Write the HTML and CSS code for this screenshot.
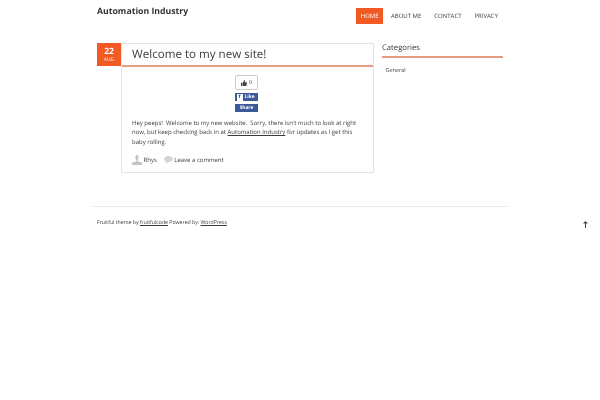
FILE: index.html
```html
<!DOCTYPE html>
<html>
<head>
<meta charset="UTF-8">
<title>Automation Industry</title>
<link rel="stylesheet" href="styles.css">
</head>
<body>

<div class="page">
  <div class="header">
    <a class="logo" href="#">Automation Industry</a>
    <ul class="nav">
      <li class="current"><a href="#">HOME</a></li>
      <li><a href="#">ABOUT ME</a></li>
      <li><a href="#">CONTACT</a></li>
      <li><a href="#">PRIVACY</a></li>
    </ul>
  </div>

  <div class="main">
    <div class="date">
      <span class="day">22</span>
      <span class="month">AUG</span>
    </div>

    <div class="post">
      <h1 class="post-title">Welcome to my new site!</h1>
      <div class="post-body">
        <div class="share">
          <div class="count">
            <svg class="thumb" width="6" height="6" viewBox="0 0 8 8"><path d="M0 3.500h1.800V8H0zM2.400 3.500 4 1V0h.8l.5 1-.5 2H8l-.8 5H2.400z" fill="#444"/></svg>
            <span>0</span>
          </div>
          <div class="fb-btn"><b class="fb-f">f</b>Like</div>
          <div class="fb-btn">Share</div>
        </div>
        <p class="text">Hey peeps!&nbsp; Welcome to my new website.&nbsp; Sorry, there isn't much to look at right now, but keep checking back in at <a href="#">Automation Industry</a> for updates as I get this baby rolling.</p>
        <div class="meta">
          <span class="meta-item">
            <svg width="10" height="10" viewBox="0 0 10 10"><path d="M3.400 2.600C3.400 1 4 0 5 0s1.600 1 1.600 2.600c0 1.200-.5 2.200-1 2.700v1l4 1.300c.3.100.4.400.4.700V10H0V8.300c0-.3.100-.6.400-.7l4-1.300v-1c-.5-.5-1-1.500-1-2.700z" fill="#c4c4c4"/></svg>
            Rhys
          </span>
          <span class="meta-item">
            <svg width="9" height="8" viewBox="0 0 10 9"><path d="M5 0c2.800 0 5 1.500 5 3.500S7.800 7 5 7h-.6L2.500 9V6.700C1 6.200 0 5 0 3.500 0 1.500 2.200 0 5 0z" fill="#d4d4d4"/></svg>
            Leave a comment
          </span>
        </div>
      </div>
    </div>

    <div class="sidebar">
      <h3 class="widget-title">Categories</h3>
      <a class="cat" href="#">General</a>
    </div>
  </div>

  <div class="footer">
    Fruitful theme by <a href="#">fruitfulcode</a> Powered by: <a href="#">WordPress</a>
  </div>
</div>

<a class="top" href="#"><svg width="5" height="7" viewBox="0 0 5 7"><path d="M2.500 0 5 2.500H3V7H2V2.500H0z" fill="#444"/></svg></a>

</body>
</html>
```

FILE: styles.css
```css
*{ margin: 0; padding: 0; box-sizing: border-box; }
body{ font-family: "Open Sans", "Noto Sans", sans-serif; color: #3c3c3c; background: #fff; text-rendering: geometricPrecision; }
a{ color: #3c3c3c; }
ul{ list-style: none; }

.page{ width: 416px; margin-left: 92px; will-change: transform; }

.header{ display: flex; justify-content: space-between; height: 43px; padding-left: 5px; }
.logo{ font-size: 8.700px; font-weight: 700; line-height: 12px; margin-top: 5px; color: #333; text-decoration: none; }
.nav{ display: flex; margin-top: 8px; margin-right: 4px; }
.nav li{ height: 16px; padding: 0 6px; margin-left: 1px; }
.nav a{ font-size: 6px; line-height: 16px; color: #3c3c3c; text-decoration: none; display: block; }
.nav li.current{ background: #f15a23; padding: 0 4.500px; margin-right: 1px; }
.nav li.current a{ color: #fff; }

.main{ display: flex; align-items: flex-start; padding-left: 5px; }

.date{ width: 24px; height: 23px; background: #f15a23; color: #fff; text-align: center; }
.date span{ display: block; }
.day{ font-size: 8.500px; font-weight: 700; line-height: 10px; padding-top: 4px; height: 14px; }
.month{ font-size: 5px; line-height: 6px; }

.post{ width: 253px; height: 130px; border: 1px solid #e4e4e4; }
.post-title{ height: 23px; padding-left: 10px; font-size: 11.600px; font-weight: 400; line-height: 22px; color: #3c3c3c; border-bottom: 2px solid #e49c82; }
.post-body{ padding: 8px 10px 0; }

.share{ width: 23px; margin-left: 103px; }
.count{ height: 15px; border: 1px solid #ccc; border-radius: 2px; display: flex; align-items: center; justify-content: center; gap: 2px; font-size: 5px; }
.fb-btn{ height: 8px; background: #3b5998; color: #fff; font-size: 4.800px; font-weight: 700; line-height: 8px; text-align: center; margin-top: 3px; display: flex; align-items: center; justify-content: center; gap: 2px; }
.fb-f{ width: 6px; height: 7px; margin-left: -2px; background: #fff; color: #3b5998; line-height: 7px; }

.text{ margin-top: 6.500px; font-size: 6px; line-height: 9.500px; }
.meta{ display: flex; gap: 7px; margin-top: 8px; }
.meta-item{ display: flex; align-items: center; gap: 1.500px; font-size: 6px; line-height: 10px; }

.sidebar{ width: 121px; margin-left: 8px; }
.widget-title{ height: 15px; font-size: 7.700px; font-weight: 400; line-height: 10px; color: #3c3c3c; border-bottom: 2px solid #e49c82; }
.cat{ display: block; margin: 8px 0 0 3.500px; font-size: 5.500px; line-height: 9px; text-decoration: none; }

.footer{ margin-top: 33px; padding: 11px 5px 0; border-top: 1px solid #e8e8e8; font-size: 5.200px; line-height: 8px; }

.top{ position: absolute; left: 583px; top: 219px; line-height: 7px; }
```
